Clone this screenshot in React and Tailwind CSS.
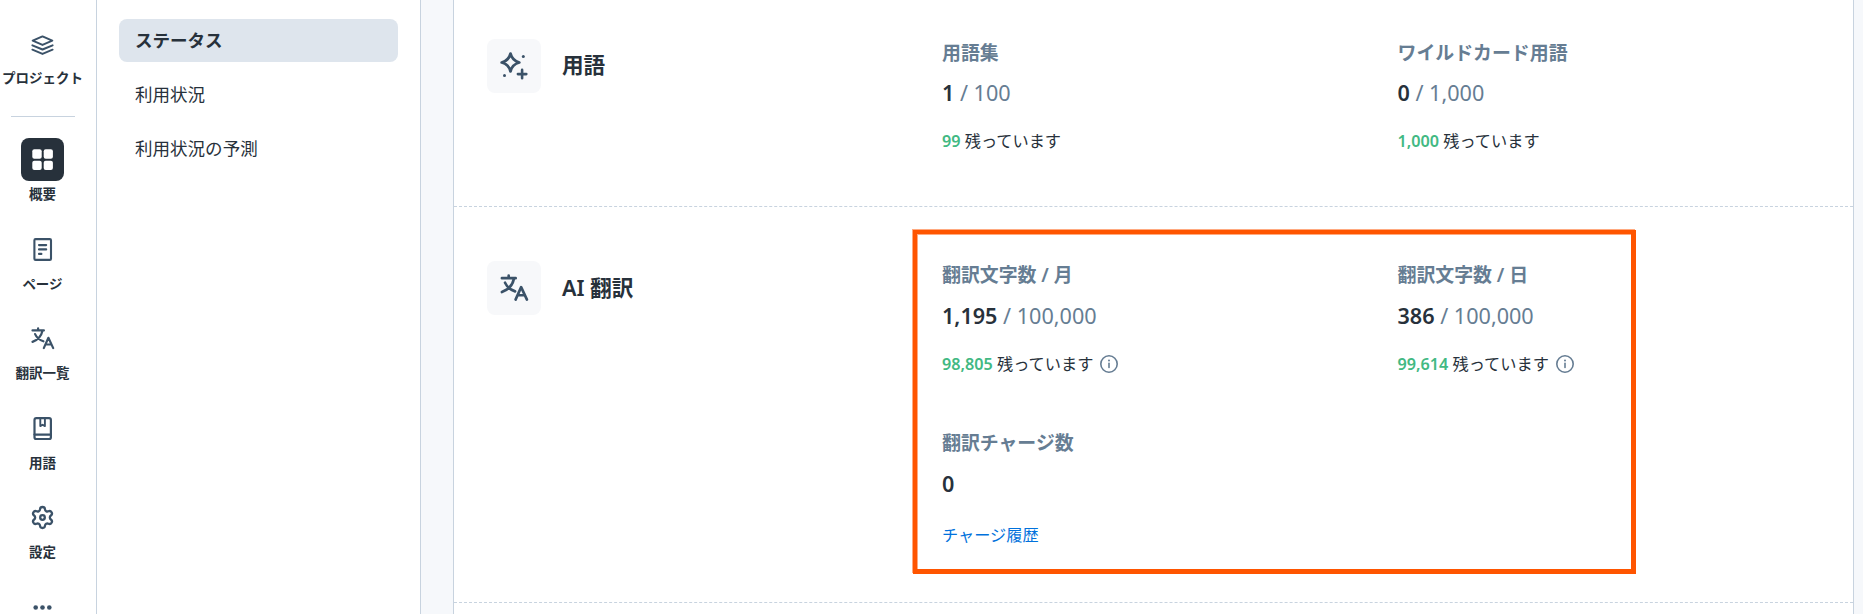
const StrokeIcon = ({ className = 'size-[25px]', strokeWidth = 2.2, viewBox = '-0.5 -0.5 25 25', children }) => (
  <svg
    className={`shrink-0 ${className}`}
    viewBox={viewBox}
    fill="none"
    stroke="currentColor"
    strokeWidth={strokeWidth}
    strokeLinecap="round"
    strokeLinejoin="round"
  >
    {children}
  </svg>
);

const LayersIcon = () => (
  <StrokeIcon strokeWidth={2}>
    <path d="M12 2.9 21.8 7.2 12 11.4 2.2 7.2Z" />
    <path d="M1.9 11.8 12 16l10.1-4.2" />
    <path d="M1.9 16.2 12 20.4l10.1-4.2" />
  </StrokeIcon>
);

const GridIcon = () => (
  <svg className="size-[25px]" viewBox="-0.5 -0.5 25 25" fill="currentColor">
    <rect x="1.8" y="1.8" width="9.4" height="9.4" rx="2" />
    <rect x="13.2" y="1.8" width="9.2" height="9.4" rx="2" />
    <rect x="1.8" y="13.2" width="9.4" height="9.2" rx="2" />
    <rect x="13.2" y="13.2" width="9.2" height="9.2" rx="2" />
  </svg>
);

const PageIcon = () => (
  <StrokeIcon strokeWidth={2.1}>
    <rect x="3.9" y="1.6" width="16.6" height="20.8" rx="1.2" />
    <path d="M8.5 7.6h7.2M8.5 11.9h7.2M8.5 16.4h2.4" />
  </StrokeIcon>
);

const TranslateIcon = ({ className, viewBox }) => (
  <StrokeIcon className={className} viewBox={viewBox}>
    <path d="M2 3.9h11.4M7.6 1.8v2M11.9 4.5C10.9 9.3 7.5 13.3 2 15.4M4.6 7.6c1.6 3.6 4.6 6 8.3 7.2" />
    <path d="m13.3 21.6 4.6-10.3 4.8 10.3M15.2 18h5.4" />
  </StrokeIcon>
);

const BookIcon = () => (
  <StrokeIcon>
    <rect x="4" y="1.7" width="16.4" height="20.8" rx="1.8" />
    <path d="M4 18.1h16.4" />
    <path d="M9.8 2v7.6l2.3-1.4 2.3 1.4V2" strokeWidth="1.9" />
  </StrokeIcon>
);

const GearIcon = () => (
  <StrokeIcon viewBox="0.1 0.1 23.8 23.8">
    <path d="M9.671 4.136a2.34 2.34 0 0 1 4.659 0 2.34 2.34 0 0 0 3.319 1.915 2.34 2.34 0 0 1 2.33 4.033 2.34 2.34 0 0 0 0 3.831 2.34 2.34 0 0 1-2.33 4.033 2.34 2.34 0 0 0-3.319 1.915 2.34 2.34 0 0 1-4.659 0 2.34 2.34 0 0 0-3.32-1.915 2.34 2.34 0 0 1-2.33-4.033 2.34 2.34 0 0 0 0-3.831A2.34 2.34 0 0 1 6.35 6.051a2.34 2.34 0 0 0 3.319-1.915" />
    <circle cx="12" cy="12" r="2.2" />
  </StrokeIcon>
);

const MoreIcon = () => (
  <svg className="size-[25px]" viewBox="-0.5 -0.5 25 25" fill="currentColor">
    <circle cx="5.2" cy="12" r="2.3" />
    <circle cx="12" cy="12" r="2.3" />
    <circle cx="18.8" cy="12" r="2.3" />
  </svg>
);

const SparkleIcon = () => (
  <StrokeIcon className="size-[30px]" viewBox="-0.5 -0.5 30 30" strokeWidth={2.8}>
    <path d="M11 2.2C12.2 7 14.6 9.6 19.8 11 14.6 12.4 12.2 15 11 19.8 9.8 15 7.4 12.4 2.2 11 7.4 9.6 9.8 7 11 2.2Z" />
    <path d="M22.6 18.4v8.4M18.4 22.6h8.4" strokeWidth="2.6" />
    <circle cx="23.8" cy="5" r="1.5" fill="currentColor" stroke="none" />
    <circle cx="5" cy="24" r="1.5" fill="currentColor" stroke="none" />
  </StrokeIcon>
);

const InfoIcon = () => (
  <StrokeIcon className="size-[18px] text-[#667d93]" viewBox="0 0 18 18" strokeWidth={1.6}>
    <circle cx="9" cy="9" r="8.2" />
    <path d="M9 8.4v4" />
    <circle cx="9" cy="5.5" r="1" fill="currentColor" stroke="none" />
  </StrokeIcon>
);

const navItems = [
  { label: '概要', icon: <GridIcon />, active: true },
  { label: 'ページ', icon: <PageIcon /> },
  { label: '翻訳一覧', icon: <TranslateIcon /> },
  { label: '用語', icon: <BookIcon /> },
  { label: '設定', icon: <GearIcon /> },
  { label: '', icon: <MoreIcon /> },
];

const menuItems = ['ステータス', '利用状況', '利用状況の予測'];

function NavItem({ label, icon, active }) {
  return (
    <a className="flex h-[89.5px] w-full shrink-0 flex-col items-center">
      <span
        className={`flex size-[43px] shrink-0 items-center justify-center rounded-[8px] ${
          active ? 'bg-[#27313b] text-white' : 'text-[#3b5268]'
        }`}
      >
        {icon}
      </span>
      <span className="mt-[2px] text-[13.5px] leading-[22px] font-semibold whitespace-nowrap">{label}</span>
    </a>
  );
}

function Metric({ label, value, limit, rest, info, link, compact }) {
  return (
    <div className="flex flex-col">
      <div className="text-[18.9px] leading-[28px] font-semibold text-[#667d93]">{label}</div>
      <div className={`text-[21.6px] leading-[32px] text-[#667d93] ${compact ? 'mt-[10px]' : 'mt-[11px]'}`}>
        <span className="font-semibold text-[#27313b]">{value}</span>
        {limit && ` / ${limit}`}
      </div>
      {rest && (
        <div className="mt-5 flex items-center gap-[7px] text-[16.2px] leading-6">
          <span>
            <span className="font-semibold text-[#42b983]">{rest}</span> 残っています
          </span>
          {info && <InfoIcon />}
        </div>
      )}
      {link && <a className="mt-[23px] text-[16.2px] leading-6 text-[#0071dc]">{link}</a>}
    </div>
  );
}

function Section({ icon, title, className, titleClassName, children }) {
  return (
    <section className={`flex border-b border-dashed border-[#c8d3df] pl-[33px] ${className}`}>
      <div className="flex h-[54px] w-[455px] shrink-0 items-center gap-[21px]">
        <span className="flex size-[54px] items-center justify-center rounded-[8px] bg-[#f7f8fa] text-[#3b5268]">
          {icon}
        </span>
        <h2 className={`text-[21.6px] leading-8 font-semibold ${titleClassName}`}>{title}</h2>
      </div>
      <div className="grid flex-1 grid-cols-[455.5px_1fr] content-start">{children}</div>
    </section>
  );
}

export default function App() {
  return (
    <div className="relative flex h-[614px] w-[1863px] overflow-hidden bg-[#f6f8fb] font-['Noto_Sans','Noto_Sans_CJK_JP',sans-serif] text-[#27313b]">
      {/* Icon navigation */}
      <nav className="flex w-[97px] shrink-0 flex-col border-r border-[#c8d3df] bg-white">
        <div className="flex w-[85px] flex-col items-center pt-[24px]">
          <a className="flex h-[92px] flex-col items-center">
            <span className="flex size-[43px] items-center justify-center text-[#3b5268]">
              <LayersIcon />
            </span>
            <span className="text-[13.5px] leading-[22px] font-semibold whitespace-nowrap">プロジェクト</span>
          </a>
          <div className="mb-[21px] h-px w-16 shrink-0 bg-[#c8d3df]" />
          {navItems.map((item, index) => (
            <NavItem key={index} {...item} />
          ))}
        </div>
      </nav>

      {/* Sub menu */}
      <aside className="flex w-[324px] shrink-0 flex-col gap-[11px] border-r border-[#c8d3df] bg-white pt-[19px] pr-[22px] pl-[22px]">
        {menuItems.map((item, index) => (
          <a
            key={item}
            className={`flex h-[43px] items-center rounded-[8px] px-4 pb-[2px] text-[17.55px] leading-6 ${
              index === 0 ? 'bg-[#dee5ed] font-semibold' : ''
            }`}
          >
            {item}
          </a>
        ))}
      </aside>

      <main className="flex flex-1 pr-[9px] pl-8">
        <div className="flex w-full flex-col border-x border-[#c8d3df] bg-white">
          <Section icon={<SparkleIcon />} title="用語" className="h-[207px] pt-[39px]" titleClassName="pb-[2px]">
            <Metric label="用語集" value="1" limit="100" rest="99" compact />
            <Metric label="ワイルドカード用語" value="0" limit="1,000" rest="1,000" compact />
          </Section>
          <Section
            icon={<TranslateIcon className="size-[30px]" viewBox="-0.4 -0.4 24.8 24.8" />}
            title="AI 翻訳"
            className="h-[396px] pt-[54px]"
          >
            <Metric label="翻訳文字数 / 月" value="1,195" limit="100,000" rest="98,805" info />
            <Metric label="翻訳文字数 / 日" value="386" limit="100,000" rest="99,614" info />
            <div className="pt-[53px]">
              <Metric label="翻訳チャージ数" value="0" link="チャージ履歴" />
            </div>
          </Section>
        </div>
      </main>

      {/* Highlight frame over the AI translation numbers */}
      <div className="pointer-events-none absolute top-[230px] left-[913px] h-[344px] w-[723px] border-t-4 border-r-5 border-b-5 border-l-4 border-[#ff5500] shadow-[-1px_-1px_0_0_#ffaa80,inset_1px_1px_0_0_#ffaa80]" />
    </div>
  );
}
